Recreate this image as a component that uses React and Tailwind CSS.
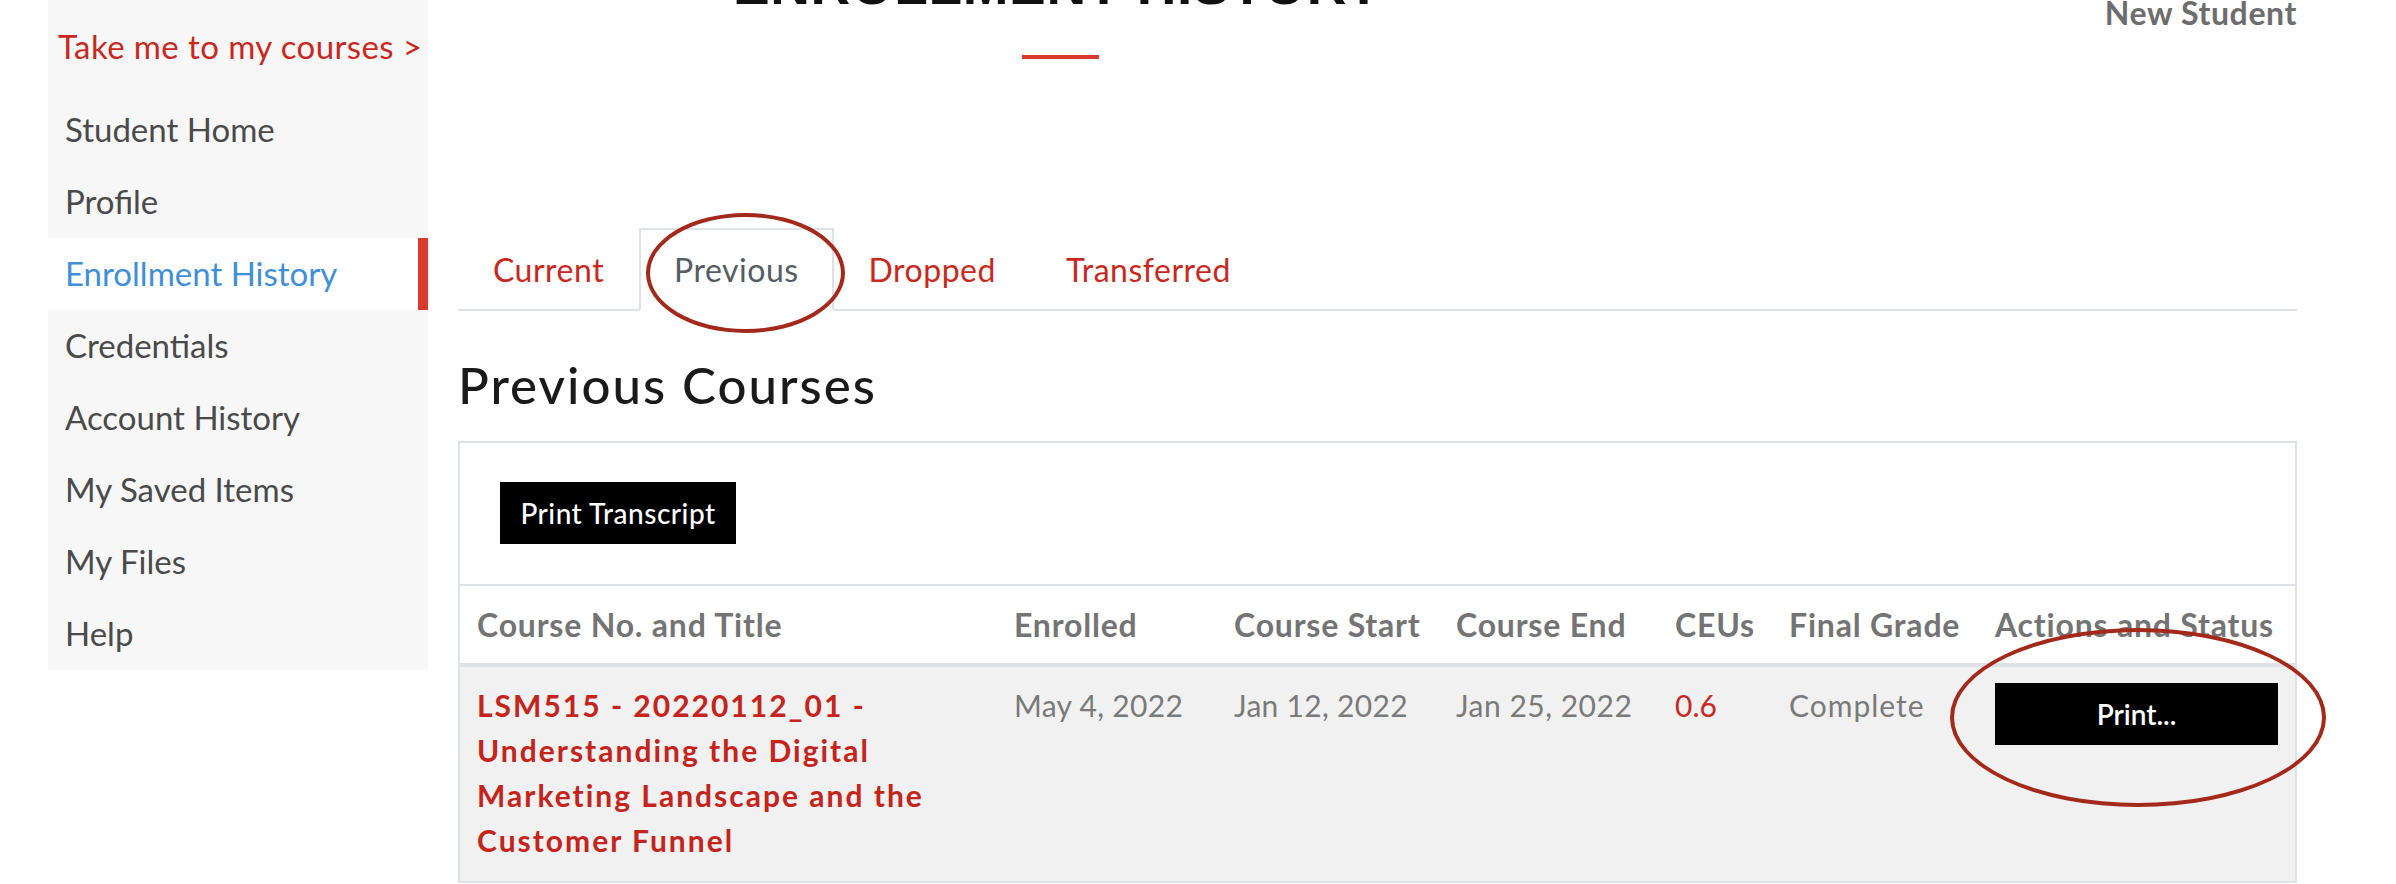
const FONT = { fontFamily: "Lato, 'Open Sans', sans-serif" };

const NAV = [
  "Student Home",
  "Profile",
  "Enrollment History",
  "Credentials",
  "Account History",
  "My Saved Items",
  "My Files",
  "Help",
];

const TABS = ["Current", "Previous", "Dropped", "Transferred"];

const COLS = "grid grid-cols-[537px_220px_222px_219px_114px_206px_317px]";

function Sidebar() {
  return (
    <aside className="ml-[48px] w-[380px] shrink-0 self-start bg-[#f7f7f7]">
      <div className="h-[94px] flex items-center pl-[10px] text-[33px] tracking-[0.4px] text-[#c8281e] whitespace-nowrap">
        Take me to my courses &gt;
      </div>
      {NAV.map((item) =>
        item === "Enrollment History" ? (
          <div key={item} className="h-[72px] flex items-center pl-[17px] bg-white border-r-[10px] border-[#d93a30] text-[33px] text-[#3f8fd9]">
            {item}
          </div>
        ) : (
          <div key={item} className="h-[72px] flex items-center pl-[17px] text-[33px] text-[#4a4a4a]">
            {item}
          </div>
        )
      )}
    </aside>
  );
}

function Tabs() {
  return (
    <div className="flex border-b-2 border-[#dee2e6]">
      {TABS.map((t) =>
        t === "Previous" ? (
          <div key={t} className="relative h-[83px] mb-[-2px] px-[33px] flex items-center border-2 border-[#dee2e6] border-b-white bg-white text-[32px] tracking-[0.5px] text-[#555c63]">
            {t}
            {/* annotation circle */}
            <div className="absolute left-[5px] top-[-17px] w-[199px] h-[120px] rounded-[50%] border-[4px] border-[#a3291b]" />
          </div>
        ) : (
          <div key={t} className="h-[83px] mb-[-2px] px-[33px] flex items-center border-2 border-transparent text-[32px] tracking-[0.5px] text-[#c8281e]">
            {t}
          </div>
        )
      )}
    </div>
  );
}

function CoursesTable() {
  const heads = ["Course No. and Title", "Enrolled", "Course Start", "Course End", "CEUs", "Final Grade", "Actions and Status"];
  return (
    <div className="mt-[26px] border-2 border-[#dee2e6]">
      <div className="pl-[40px] pt-[39px] pb-[40px] border-b-2 border-[#dee2e6]">
        <button className="w-[236px] h-[62px] bg-black text-white text-[28px] font-medium tracking-[0.5px]">Print Transcript</button>
      </div>

      <div className={`${COLS} h-[81px] items-center border-b-4 border-[#dee2e6]`}>
        {heads.map((h) => (
          <div key={h} className="px-[17px] text-[32px] font-bold text-[#747474] tracking-[0.8px] whitespace-nowrap">{h}</div>
        ))}
      </div>

      <div className={`${COLS} bg-[#f1f1f1] pb-[18px] text-[30px] leading-[45px]`}>
        <div className="px-[17px] pt-[16px] font-bold text-[#c4241b] tracking-[2px] whitespace-nowrap">
          <div>LSM515 - 20220112_01 -</div>
          <div>Understanding the Digital</div>
          <div>Marketing Landscape and the</div>
          <div>Customer Funnel</div>
        </div>
        <div className="px-[17px] pt-[16px] text-[#7a7a7a] tracking-[0.3px] whitespace-nowrap">May 4, 2022</div>
        <div className="px-[17px] pt-[16px] text-[#7a7a7a] tracking-[0.3px] whitespace-nowrap">Jan 12, 2022</div>
        <div className="px-[17px] pt-[16px] text-[#7a7a7a] tracking-[0.5px] whitespace-nowrap">Jan 25, 2022</div>
        <div className="px-[17px] pt-[16px] text-[#c8281e]">0.6</div>
        <div className="px-[17px] pt-[16px] text-[#7a7a7a] tracking-[1px]">Complete</div>
        <div className="relative px-[17px] pt-[16px]">
          <button className="w-full h-[62px] bg-black text-white text-[28px] font-semibold">Print...</button>
          {/* annotation circle */}
          <div className="absolute left-[-28px] top-[-39px] w-[376px] h-[179px] rounded-[50%] border-[4px] border-[#a3291b]" />
        </div>
      </div>
    </div>
  );
}

export default function App() {
  return (
    <div className="w-[2396px] h-[884px] overflow-hidden bg-white flex" style={FONT}>
      <Sidebar />

      <main className="ml-[30px] w-[1839px] shrink-0">
        <div className="h-[228px]">
          <div className="flex items-start h-[55px]">
            <h1
              className="ml-[275px] mt-[-42px] text-[55px] leading-[55px] font-bold tracking-[0.6px] text-[#111] whitespace-nowrap"
              style={{ fontFamily: "'Liberation Sans', Arial, sans-serif" }}
            >
              ENROLLMENT HISTORY
            </h1>
            <div className="ml-auto mt-[-3px] text-[32px] leading-[32px] font-bold tracking-[0.6px] text-[#6d6d6d]">New Student</div>
          </div>
          <div className="ml-[564px] w-[77px] h-[4px] bg-[#d93a30]" />
        </div>

        <Tabs />

        <h2 className="mt-[44px] text-[51px] leading-[60px] font-medium text-[#1a1a1a] tracking-[2px]">Previous Courses</h2>

        <CoursesTable />
      </main>
    </div>
  );
}
